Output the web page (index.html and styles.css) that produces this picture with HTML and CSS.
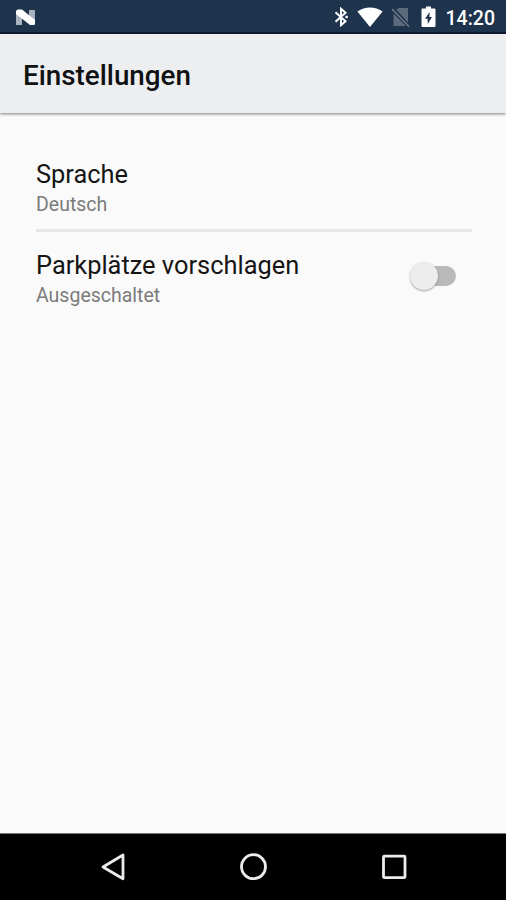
FILE: index.html
```html
<!DOCTYPE html>
<html lang="de">
<head>
<meta charset="utf-8">
<title>Einstellungen</title>
<link rel="stylesheet" href="styles.css">
</head>
<body>
<div class="screen">
  <div class="status-bar">
    <svg class="icon-n" width="24" height="20" viewBox="0 0 24 20">
      <path fill="#a9b3bf" d="M2 5l6 4v9H2zM15 3h6v13l-6-5z"/>
      <path fill="#fff" d="M3.500 2.500h4.500L21 13v3.500q0 1.500-1.500 1.500H16L2 7V4z"/>
    </svg>
    <div class="status-icons">
      <svg class="icon-bt" width="14" height="20" viewBox="0 0 14 20" fill="none" stroke="#fff" stroke-width="2">
        <path d="M1.500 5.200l10 9L7 18.200V1.800l4.500 4-10 9"/>
        <path fill="#fff" stroke="none" d="M11.400 8.800h2.400v2.400h-2.400z"/>
      </svg>
      <svg class="icon-wifi" width="26" height="20" viewBox="0 0 26 20">
        <path fill="#fff" d="M.4 4.500C8-1 18-1 25.600 4.500L13 20z"/>
      </svg>
      <svg class="icon-sim" width="20" height="22" viewBox="0 0 20 22">
        <path fill="#5b6b7b" d="M7.500 2H17v14.500L5.500 4zM2.500 7.500L15 20H2.500z"/>
        <path stroke="#6c7a87" stroke-width="1.600" d="M1 3l17 17.500"/>
      </svg>
      <svg class="icon-battery" width="15" height="22" viewBox="0 0 15 22">
        <path fill="#fff" d="M5 .5h5v2h3.500q1 0 1 1V20q0 1-1 1h-12q-1 0-1-1V3.500q0-1 1-1H5z"/>
        <path fill="#1e334c" d="M8.700 6L4 12.700h2.700V18L11 11H8.400z"/>
      </svg>
      <span class="clock">14:20</span>
    </div>
  </div>
  <header class="app-bar"><h1>Einstellungen</h1></header>
  <main class="settings">
    <section class="row row-language">
      <div class="label">
        <div class="title">Sprache</div>
        <div class="summary">Deutsch</div>
      </div>
    </section>
    <section class="row row-parking">
      <div class="label">
        <div class="title">Parkplätze vorschlagen</div>
        <div class="summary">Ausgeschaltet</div>
      </div>
      <div class="switch"><div class="thumb"></div></div>
    </section>
  </main>
  <nav class="nav-bar">
    <svg width="28" height="30" viewBox="0 0 28 30"><path d="M24 3v23.800L4 15z"/></svg>
    <svg width="28" height="30" viewBox="0 0 28 30"><circle cx="13.500" cy="14.700" r="12"/></svg>
    <svg width="28" height="30" viewBox="0 0 28 30"><rect x="3.500" y="4.200" width="21.500" height="21.500" rx="1"/></svg>
  </nav>
</div>
</body>
</html>
```
FILE: styles.css
```css
* { box-sizing: border-box; }
body { margin: 0; font-family: Roboto, sans-serif; }
.screen {
  display: flex;
  flex-direction: column;
  width: 506px;
  height: 900px;
  background: #fafafa;
}
.status-bar {
  display: flex;
  align-items: center;
  justify-content: space-between;
  height: 34px;
  padding: 2px 11px 0 14px;
  background: #1e334c;
  border-bottom: 2px solid #101b34;
}
.status-icons { display: flex; align-items: center; }
.icon-n { margin-top: -1px; }
.icon-bt { margin-right: 9px; }
.icon-wifi { margin-right: 8px; }
.icon-sim { margin-right: 10px; }
.icon-battery { margin-right: 10px; }
.clock {
  color: #fff;
  font-size: 19.500px;
  font-weight: 500;
  line-height: 22px;
  margin-top: 4px;
}
.app-bar {
  display: flex;
  align-items: center;
  height: 79px;
  padding: 4px 23px 0;
  background: #eceef0;
  box-shadow: 0 1px 3px rgba(0, 0, 0, .5);
}
h1 {
  margin: 0;
  color: #101113;
  font-size: 27.800px;
  font-weight: 500;
  line-height: 32px;
}
.settings { flex: 1; padding: 29px 34px 0 36px; }
.row {
  display: flex;
  justify-content: space-between;
  height: 90px;
  padding: 16px 16px 0 0;
}
.row-language { border-bottom: 3px solid #e6e6e6; }
.row-parking { padding-top: 17px; }
.title { color: #151515; font-size: 25.400px; line-height: 32px; }
.summary { color: #7b7b7b; font-size: 19.500px; line-height: 30px; }
.switch {
  width: 40px;
  height: 20px;
  margin-top: 17px;
  border-radius: 10px;
  background: #b9b9b9;
}
.thumb {
  width: 28px;
  height: 28px;
  margin: -4px 0 0 -6px;
  border-radius: 50%;
  background: #ececec;
  box-shadow: 0 1px 2px rgba(0, 0, 0, .35);
}
.nav-bar {
  display: flex;
  justify-content: space-between;
  align-items: center;
  height: 67px;
  padding: 0 98px 0 99px;
  background: #000;
  border-top: 1px solid #777;
}
.nav-bar svg { fill: none; stroke: #ececec; stroke-width: 2.800; stroke-linejoin: round; }
```
